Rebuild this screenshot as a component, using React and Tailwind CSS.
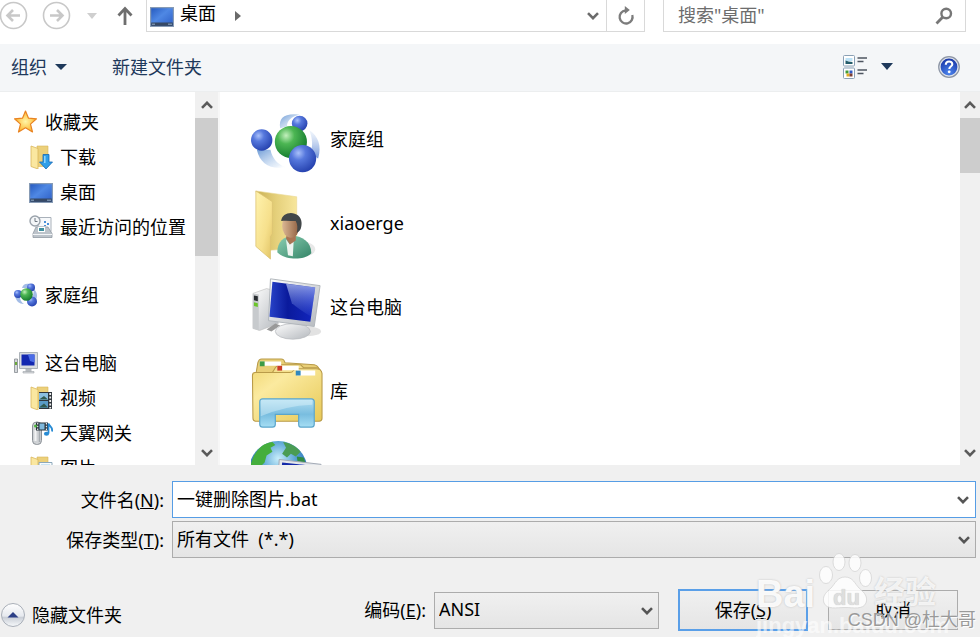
import React, { useState } from "react";

const FAVORITES = [
  { name: "下载", icon: DownloadIcon },
  { name: "桌面", icon: DesktopIcon },
  { name: "最近访问的位置", icon: RecentIcon },
];

const COMPUTER = [
  { name: "视频", icon: VideoIcon },
  { name: "天翼网关", icon: GatewayIcon },
  { name: "图片", icon: PicturesIcon },
];

const FILES = [
  { name: "家庭组", icon: HomegroupIcon },
  { name: "xiaoerge", icon: UserFolderIcon },
  { name: "这台电脑", icon: ComputerIcon },
  { name: "库", icon: LibraryIcon },
  { name: "", icon: NetworkIcon },
];

export default function App() {
  const [fileName, setFileName] = useState("一键删除图片.bat");
  const [query, setQuery] = useState("");

  return (
    <div className="relative flex h-screen flex-col overflow-hidden bg-[#f0f0f0] font-['Noto_Sans','Noto_Sans_CJK_SC',sans-serif] text-[18px] leading-6 text-black">
      {/* Address bar */}
      <header className="flex h-11 shrink-0 items-start bg-white pr-[14px]">
        <nav className="flex h-[31px] w-[146px] shrink-0 items-center">
          <button aria-label="后退" className="-ml-px">
            <ArrowCircle />
          </button>
          <button aria-label="前进" className="ml-[14px] rotate-180">
            <ArrowCircle />
          </button>
          <button aria-label="最近" className="ml-4">
            <Triangle className="h-[6px] w-[10px] text-[#cfcfcf]" />
          </button>
          <button aria-label="上移" className="ml-5">
            <svg viewBox="0 0 16 20" className="h-5 w-4" fill="none" stroke="#6e6e6e" strokeWidth="2.8">
              <path d="M8 19V3M1.5 9.5 8 2.500l6.500 7" />
            </svg>
          </button>
        </nav>

        <div className="flex h-8 flex-1 border-x border-b border-[#d9d9d9]">
          <button className="flex items-center pl-[3px]">
            <DesktopIcon className="h-6 w-6" />
            <span className="-mt-[6px] ml-[6px]">桌面</span>
            <svg viewBox="0 0 6 10" className="ml-[19px] h-[10px] w-[6px]">
              <path d="M0 0l6 5-6 5z" fill="#6a6a6a" />
            </svg>
          </button>
          <button aria-label="展开" className="ml-auto flex w-[26px] items-center justify-center">
            <Chevron className="h-2 w-3 text-[#6b6b6b]" />
          </button>
          <button aria-label="刷新" className="flex w-[38px] items-center justify-center border-l border-[#d9d9d9]">
            <svg viewBox="0 0 18 20" className="h-5 w-[18px]" fill="none" stroke="#7c7c7c" strokeWidth="2.300">
              <path d="M8.500 4.500A6.500 6.500 0 1 0 15.300 9" />
              <path d="M7.800 0v8l5-4z" fill="#7c7c7c" stroke="none" />
            </svg>
          </button>
        </div>

        <div className="ml-[18px] flex h-8 w-[303px] items-center border-x border-b border-[#d9d9d9] pr-3 pl-[14px]">
          <input
            aria-label="搜索"
            value={query}
            onChange={(e) => setQuery(e.target.value)}
            placeholder={'搜索"桌面"'}
            className="h-7 min-w-0 flex-1 bg-transparent pb-[2px] outline-none placeholder:text-[#6d6d6d]"
          />
          <svg viewBox="0 0 18 18" className="h-[18px] w-[18px]" fill="none" stroke="#777" strokeWidth="2.400">
            <circle cx="11.200" cy="6.500" r="4.800" />
            <path d="M7.600 10.200 1.500 16.500" strokeWidth="2.800" />
          </svg>
        </div>
      </header>

      {/* Toolbar */}
      <div className="flex h-12 shrink-0 items-center border-b border-[#eceeef] bg-[#f4f6f8] pr-5 pb-[2px] pl-[11px] text-[#1e395b]">
        <button className="flex items-center gap-2">
          组织
          <Triangle className="h-[6px] w-3 text-[#1e395b]" />
        </button>
        <button className="ml-[45px]">新建文件夹</button>
        <button aria-label="更改视图" className="ml-auto flex items-center gap-[14px]">
          <ViewIcon />
          <Triangle className="h-[7px] w-3 text-[#1e395b]" />
        </button>
        <button aria-label="帮助" className="ml-[45px]">
          <HelpIcon />
        </button>
      </div>

      {/* Folder tree and file list */}
      <main className="flex min-h-0 flex-1 bg-white">
        <aside className="w-[195px] shrink-0 overflow-hidden pt-3">
          <TreeGroup name="收藏夹" icon={StarIcon} items={FAVORITES} />
          <TreeGroup name="家庭组" icon={HomegroupSmallIcon} items={[]} />
          <TreeGroup name="这台电脑" icon={ComputerSmallIcon} items={COMPUTER} />
        </aside>
        <ScrollBar className="w-[25px] border-r-2 border-[#f7f7f7]" thumb="h-[138px]" />
        <ul className="flex-1 overflow-hidden pt-[5px] pl-[31px]">
          {FILES.map(({ name, icon: Icon }, i) => (
            <li key={i} className="flex h-[84px] items-center gap-[7px]">
              <Icon className="mt-1 h-[72px] w-[72px] shrink-0" />
              <span>{name}</span>
            </li>
          ))}
        </ul>
        <ScrollBar className="w-5" thumb="h-[55px]" />
      </main>

      {/* File name, type and encoding */}
      <form className="shrink-0 pt-4 pb-[6px]" onSubmit={(e) => e.preventDefault()}>
        <div className="flex items-center gap-2 pr-1">
          <label htmlFor="filename" className="w-[164px] text-right">
            文件名(<u>N</u>):
          </label>
          <div className="flex h-[37px] flex-1 items-center border border-[#569de5] bg-white pr-[6px]">
            <input
              id="filename"
              value={fileName}
              onChange={(e) => setFileName(e.target.value)}
              className="h-full min-w-0 flex-1 bg-transparent pb-[3px] pl-1 outline-none"
            />
            <Chevron className="h-2 w-3 text-[#555]" />
          </div>
        </div>

        <div className="mt-[3px] flex items-center gap-2 pr-1">
          <label htmlFor="filetype" className="w-[164px] text-right">
            保存类型(<u>T</u>):
          </label>
          <Select id="filetype" className="flex-1" option={"所有文件\u00a0\u00a0(*.*)"} />
        </div>

        <div className="mt-[31px] flex items-center pr-[22px]">
          <button type="button" className="flex items-center gap-[6px] pt-[10px]">
            <svg viewBox="0 0 26 26" className="h-[26px] w-[26px]">
              <defs>
                <linearGradient id="orb" x1="0" y1="0" x2="0" y2="1">
                  <stop offset="0" stopColor="#fff" />
                  <stop offset="0.55" stopColor="#e6e9ee" />
                  <stop offset="0.600" stopColor="#c9ced6" />
                  <stop offset="1" stopColor="#f8fafc" />
                </linearGradient>
              </defs>
              <circle cx="13" cy="13" r="11.500" fill="url(#orb)" stroke="#a9afb8" />
              <path d="M7.500 15.500 13 10l5.500 5.500z" fill="#2c3f86" />
            </svg>
            隐藏文件夹
          </button>
          <label htmlFor="encoding" className="ml-auto">
            编码(<u>E</u>):
          </label>
          <Select id="encoding" className="ml-2 w-[225px]" option="ANSI" />
          <button type="submit" className="ml-[19px] h-[42px] w-[130px] border-2 border-[#5a9fe8] bg-gradient-to-b from-[#f0f0f0] to-[#e5e5e5]">
            保存(<u>S</u>)
          </button>
          <button type="button" className="ml-5 h-10 w-[130px] border border-[#acacac] bg-gradient-to-b from-[#f0f0f0] to-[#e5e5e5]">
            取消
          </button>
        </div>
      </form>

      <Watermark />
    </div>
  );
}

function TreeGroup({ name, icon: Icon, items }) {
  return (
    <section className="mb-[33px]">
      <div className="flex h-[35px] items-center gap-[7px] pl-[14px]">
        <Icon className="h-6 w-6 shrink-0" />
        {name}
      </div>
      {items.map(({ name: label, icon: ItemIcon }) => (
        <div key={label} className="flex h-[35px] items-center gap-[7px] pl-[29px] whitespace-nowrap">
          <ItemIcon className="h-6 w-6 shrink-0" />
          {label}
        </div>
      ))}
    </section>
  );
}

function ScrollBar({ className, thumb }) {
  return (
    <div className={`flex shrink-0 flex-col items-center bg-[#f0f0f0] ${className}`}>
      <div className="flex h-[26px] items-center">
        <Chevron className="h-2 w-3 rotate-180 text-[#5a5a5a]" />
      </div>
      <div className={`w-full bg-[#cdcdcd] ${thumb}`} />
      <div className="mt-auto flex h-[25px] items-center">
        <Chevron className="h-2 w-3 text-[#5a5a5a]" />
      </div>
    </div>
  );
}

function Select({ id, option, className }) {
  return (
    <div className={`relative ${className}`}>
      <select
        id={id}
        className="block h-[37px] w-full appearance-none border border-[#acacac] bg-gradient-to-b from-[#f0f0f0] to-[#e5e5e5] pb-[2px] pl-1 outline-none"
      >
        <option>{option}</option>
      </select>
      <Chevron className="pointer-events-none absolute top-[15px] right-[6px] h-2 w-3 text-[#555]" />
    </div>
  );
}

function Watermark() {
  return (
    <div
      className="pointer-events-none absolute right-0 bottom-0 h-[88px] w-[224px] overflow-hidden font-['Liberation_Sans','Noto_Sans_CJK_SC',sans-serif]"
      aria-hidden="true"
    >
      <div className="absolute top-[23px] left-0 text-[38px] leading-[44px] font-bold text-white/90 [text-shadow:0_0_2px_#bbb]">Bai</div>
      <svg viewBox="0 0 54 62" className="absolute top-[2px] left-[62px] h-[62px] w-[54px] opacity-85" fill="#fff" stroke="#cfcfcf" strokeWidth="0.800">
        <ellipse cx="21" cy="11" rx="6" ry="8.500" />
        <ellipse cx="37" cy="12" rx="6" ry="8.500" />
        <ellipse cx="8" cy="24" rx="6.500" ry="8.500" />
        <ellipse cx="47.500" cy="27" rx="6" ry="8.500" />
        <path d="M27 26c-8 0-10 7-14 11C7 42 4 46 6 52c3 7 13 4.500 21 4.500s18 2.500 21-4.500c2-6-1-10-7-15-4-4-6-11-14-11z" />
      </svg>
      <div className="absolute top-[35px] left-[77px] text-[22px] leading-7 font-bold text-[#dedede] [text-shadow:0_0_1px_#bbb]">du</div>
      <div className="absolute top-[24px] left-[118px] text-[31px] leading-10 font-bold text-white/80 [text-shadow:0_0_2px_#bbb]">经验</div>
      <div className="absolute top-[65px] left-0 text-[22px] leading-6 font-bold text-white/60">jingyan.baidu.com</div>
      <div className="absolute right-1 bottom-[5px] text-[18px] leading-6 whitespace-nowrap text-[#9a9a9a] [text-shadow:1px_1px_1px_#fff]">
        CSDN @杜大哥
      </div>
    </div>
  );
}

function Chevron({ className }) {
  return (
    <svg viewBox="0 0 12 8" className={className} fill="none" stroke="currentColor" strokeWidth="2.600">
      <path d="M1 1.200 6 6.200l5-5" />
    </svg>
  );
}

function Triangle({ className }) {
  return (
    <svg viewBox="0 0 12 6" preserveAspectRatio="none" className={className}>
      <path d="M0 0h12L6 6z" fill="currentColor" />
    </svg>
  );
}

function ArrowCircle() {
  return (
    <svg viewBox="0 0 29 29" className="h-[29px] w-[29px]" fill="none" stroke="#c8c8c8">
      <circle cx="14.500" cy="14.500" r="13" strokeWidth="1.600" />
      <path d="M21 14.500H9M14 9l-5.500 5.500L14 20" strokeWidth="2.600" />
    </svg>
  );
}

function ViewIcon() {
  return (
    <svg viewBox="0 0 24 24" className="h-6 w-6">
      <g fill="#fff" stroke="#8aa0b5">
        <rect x="0.500" y="0.500" width="11" height="10.500" rx="1" />
        <rect x="0.500" y="13" width="11" height="10.500" rx="1" />
      </g>
      <path d="M2.500 3h7v3h-7z" fill="#bfe3f7" />
      <path d="M2.500 5.500l3 1 4 .5v2h-7z" fill="#245c6a" />
      <path d="M2.500 15.500h3v3h-3z" fill="#3f9b3a" />
      <path d="M6.500 15.500h3v3h-3z" fill="#2f58c4" />
      <path d="M3.500 18.500h3v3h-3z" fill="#e0ad22" />
      <path d="M6.500 18.500h3v3h-3z" fill="#7c3f35" />
      <path d="M14.500 3H24M14.500 6.500h6M14.500 15H24M14.500 18.500h6" stroke="#4d5560" strokeWidth="1.500" />
    </svg>
  );
}

function HelpIcon() {
  return (
    <svg viewBox="0 0 22 22" className="h-[22px] w-[22px]">
      <defs>
        <radialGradient id="help" cx="0.500" cy="0.850" r="0.800">
          <stop offset="0" stopColor="#4d86ee" />
          <stop offset="1" stopColor="#1c3bab" />
        </radialGradient>
      </defs>
      <circle cx="11" cy="11" r="10.300" fill="#dfe3ea" stroke="#8c95a5" strokeWidth="1.200" />
      <circle cx="11" cy="11" r="8.400" fill="url(#help)" />
      <path d="M7.800 8.700c0-4.200 6.500-4.200 6.500-.4 0 2.300-3 2.200-3 4.700" fill="none" stroke="#fff" strokeWidth="2.100" />
      <circle cx="11.200" cy="15.800" r="1.400" fill="#fff" />
    </svg>
  );
}

function StarIcon({ className }) {
  return (
    <svg viewBox="0 0 24 24" className={className}>
      <defs>
        <radialGradient id="star">
          <stop offset="0" stopColor="#fff6a8" />
          <stop offset="1" stopColor="#fdb52c" />
        </radialGradient>
      </defs>
      <path d="M11.500 1l3 7.200 8 .6-6 5.300 2 7.900-7-4.200-7 4.200 2-7.900-6-5.300 8-.6z" fill="url(#star)" stroke="#e98322" strokeWidth="1.200" strokeLinejoin="round" />
    </svg>
  );
}

function SmallFolder() {
  return (
    <>
      <path d="M8 1h11v20.500H8z" fill="#ecd07a" stroke="#d8b65a" strokeWidth="0.600" />
      <path d="M2 1l7 2.500V24l-7-2.500z" fill="#fae7a0" stroke="#d9b65c" strokeWidth="0.800" />
    </>
  );
}

function DownloadIcon({ className }) {
  return (
    <svg viewBox="0 0 24 24" className={className}>
      <SmallFolder />
      <path d="M14 9.500h6V17h3.500L17 24l-6.500-7H14z" fill="#2f9ee8" stroke="#1668b4" strokeWidth="0.800" />
      <path d="M15.800 11v7" fill="none" stroke="#8fd6ff" strokeWidth="1.500" />
    </svg>
  );
}

function DesktopIcon({ className }) {
  return (
    <svg viewBox="0 0 24 24" className={className}>
      <defs>
        <linearGradient id="desk" x1="0" y1="0" x2="1" y2="1">
          <stop offset="0" stopColor="#2458bd" />
          <stop offset="0.450" stopColor="#4f88e4" />
          <stop offset="1" stopColor="#2b5cc4" />
        </linearGradient>
      </defs>
      <rect x="0.600" y="3.600" width="22.800" height="18.800" fill="url(#desk)" stroke="#879bb5" strokeWidth="1.200" />
      <path d="M1.200 18.500h21.600v3.400H1.200z" fill="#364965" />
      <path d="M2 20.200h3M18 20.200h4" stroke="#91acc9" />
    </svg>
  );
}

function RecentIcon({ className }) {
  return (
    <svg viewBox="0 0 24 24" className={className}>
      <path d="M9 2.500h13v14H9z" fill="#f7f9fb" stroke="#a9b1ba" />
      <path d="M15 6h2v2h-2zM18 8h2v2h-2zM15 10h2v1h-2z" fill="#4a90d9" />
      <path d="M4 18.500L7 12h12l4 6.500v4H4z" fill="#bcc3ca" stroke="#929aa3" strokeWidth="0.800" />
      <path d="M8.500 11.500h8v6h-8z" fill="#fff" stroke="#a8b0b8" strokeWidth="0.600" />
      <path d="M10 13h5v3h-5z" fill="#3f8f9f" />
      <path d="M4 19.500h19" stroke="#f2f4f6" />
      <circle cx="6" cy="6" r="5" fill="#f4f6f8" stroke="#9aa2ab" strokeWidth="1.400" />
      <path d="M6 3v3.500h2.500" fill="none" stroke="#6f7882" />
    </svg>
  );
}

function VideoIcon({ className }) {
  return (
    <svg viewBox="0 0 24 24" className={className}>
      <SmallFolder />
      <path d="M10 6h13v17H10z" fill="#30363c" />
      <path d="M10 7h9v7h-9z" fill="#8bbfe0" />
      <path d="M10 15h9v7h-9z" fill="#5a9bc6" />
      <path d="M10 13.500l5-3.500 4 3.500zM10 21.500l5-4 4 4z" fill="#315b50" />
      <path d="M21.200 7v15.500" stroke="#f0f0f0" strokeWidth="1.800" strokeDasharray="2 1.500" />
    </svg>
  );
}

function GatewayIcon({ className }) {
  return (
    <svg viewBox="0 0 24 24" className={className}>
      <rect x="3.500" y="1" width="9" height="22.500" rx="4" fill="#cfd2d5" stroke="#8a9096" />
      <path d="M6.500 9v11" stroke="#f3f4f5" strokeWidth="2" />
      <path d="M10.500 9v12" stroke="#a5abb0" strokeWidth="1.500" />
      <path d="M7 1.500h12v8H7z" fill="#27323b" />
      <path d="M10.500 2.500h5v6h-5z" fill="#7fb8dc" />
      <path d="M8.700 2v7.500M17.400 2v7.500" stroke="#e8edf0" strokeWidth="1.200" strokeDasharray="1.500 1.200" />
      <circle cx="6.500" cy="5" r="1.500" fill="#4cb53c" />
      <path d="M19.500 12.500V2.500c1 3 4.500 3.500 3.500 8" fill="none" stroke="#278bd4" strokeWidth="1.800" />
      <ellipse cx="17.500" cy="12.700" rx="2.600" ry="2" fill="#278bd4" />
    </svg>
  );
}

function PicturesIcon({ className }) {
  return (
    <svg viewBox="0 0 24 24" className={className}>
      <SmallFolder />
      <path d="M10 6.500h13v12H10z" fill="#f8fbfd" stroke="#8ca8bb" />
      <path d="M12 8.500h9v8h-9z" fill="#9bcdea" />
      <path d="M12 16.500l4-5 2 3 3-2v4z" fill="#4e9ac6" />
    </svg>
  );
}

function BallGradients() {
  return (
    <>
      <radialGradient id="ballBlue" cx="0.350" cy="0.300" r="0.750">
        <stop offset="0" stopColor="#a9c0fa" />
        <stop offset="0.350" stopColor="#5678dd" />
        <stop offset="1" stopColor="#2440ad" />
      </radialGradient>
      <radialGradient id="ballGreen" cx="0.350" cy="0.300" r="0.750">
        <stop offset="0" stopColor="#c3f0bd" />
        <stop offset="0.350" stopColor="#4cb653" />
        <stop offset="1" stopColor="#12772c" />
      </radialGradient>
    </>
  );
}

function HomegroupSmallIcon({ className }) {
  return (
    <svg viewBox="0 0 24 24" className={className}>
      <defs>
        <BallGradients />
      </defs>
      <path d="M1 13c1 5 4 8 9 8-3-2-4-4-4-8zM8 5c1-4 4-5 8-4l-3 4zM20 6c3 3 4 7 2 11l-3-4z" fill="#a3bce6" />
      <circle cx="17" cy="4.500" r="4" fill="url(#ballBlue)" />
      <circle cx="4" cy="11" r="4" fill="url(#ballBlue)" />
      <circle cx="18" cy="18.500" r="5" fill="url(#ballBlue)" />
      <circle cx="12.500" cy="11.500" r="6.300" fill="url(#ballGreen)" />
    </svg>
  );
}

function HomegroupIcon({ className }) {
  return (
    <svg viewBox="0 -2 74 74" className={className}>
      <defs>
        <BallGradients />
        <linearGradient id="trail" x1="0" y1="0" x2="1" y2="1">
          <stop offset="0" stopColor="#6f9cd6" />
          <stop offset="0.800" stopColor="#dbe8f7" stopOpacity="0.600" />
          <stop offset="1" stopColor="#fff" stopOpacity="0" />
        </linearGradient>
        <linearGradient id="trailUp" x1="0" y1="0" x2="0" y2="1">
          <stop offset="0" stopColor="#e3edf9" stopOpacity="0.500" />
          <stop offset="1" stopColor="#6f92d8" />
        </linearGradient>
        <filter id="soft">
          <feGaussianBlur stdDeviation="0.800" />
        </filter>
      </defs>
      <g filter="url(#soft)">
        <path d="M6 44c3 14 14 21 30 18-9-3-14-9-16-18z" fill="url(#trail)" />
        <path d="M30 22c-2-11 5-16 20-14-9 2-13 6-13 12z" fill="url(#trail)" />
        <path d="M60 24c9 6 13 16 9 29l-8-5c3-8 2-16-1-24z" fill="url(#trailUp)" />
      </g>
      <circle cx="50" cy="17" r="8" fill="url(#ballBlue)" />
      <circle cx="11" cy="34" r="11" fill="url(#ballBlue)" />
      <circle cx="41" cy="36" r="16.500" fill="url(#ballGreen)" />
      <circle cx="53" cy="53" r="14" fill="url(#ballBlue)" />
    </svg>
  );
}

function UserFolderIcon({ className }) {
  return (
    <svg viewBox="0 0 74 74" className={className}>
      <defs>
        <linearGradient id="flap" x1="0" y1="0" x2="1" y2="1">
          <stop offset="0" stopColor="#fff3ae" />
          <stop offset="0.600" stopColor="#f6e08c" />
          <stop offset="1" stopColor="#e0c263" />
        </linearGradient>
        <linearGradient id="back" x1="0" y1="0" x2="1" y2="0">
          <stop offset="0" stopColor="#c9b052" />
          <stop offset="0.500" stopColor="#e5d07b" />
          <stop offset="1" stopColor="#f7e69c" />
        </linearGradient>
        <linearGradient id="skin" x1="0" y1="0" x2="1" y2="0">
          <stop offset="0" stopColor="#dcb894" />
          <stop offset="1" stopColor="#8d5d3f" />
        </linearGradient>
        <linearGradient id="coat" x1="0" y1="0" x2="1" y2="1">
          <stop offset="0" stopColor="#8dd0b4" />
          <stop offset="1" stopColor="#338467" />
        </linearGradient>
      </defs>
      <ellipse cx="52" cy="62" rx="14" ry="8" fill="#dedede" opacity="0.700" />
      <path d="M5 2l42 6v53l-28 2z" fill="url(#back)" stroke="#e8d792" strokeWidth="0.600" />
      <path d="M5 2l17 11v33l-2 3v23L5 59z" fill="url(#flap)" stroke="#dcc372" strokeWidth="0.800" />
      <path d="M27 65c0-11 7-16 15-17 10 0 20 6 20 18-7 8-28 7-35-1z" fill="url(#coat)" />
      <path d="M36 52l4 5 4-6-1 18-5-1z" fill="#eef4f0" />
      <path d="M37 45h9v8l-6 4-4-6z" fill="#a97454" />
      <ellipse cx="41" cy="38" rx="9" ry="12" fill="url(#skin)" />
      <path d="M31 33c1-12 21-11 21 2 0 6-2 9-5 10 1-5 1-8-1-12-5 0-10-1-15 0z" fill="#424749" />
    </svg>
  );
}

function ComputerSmallIcon({ className }) {
  return (
    <svg viewBox="0 0 24 24" className={className}>
      <path d="M0.500 8h3v13.500h-3z" fill="#d5d8db" stroke="#858b91" strokeWidth="0.800" />
      <path d="M1 11h2v3H1z" fill="#6ba83b" />
      <path d="M11.500 17h6v4h-6z" fill="#b5b9be" />
      <path d="M9 20.500h11v1.500H9z" fill="#d9dcdf" stroke="#9da2a8" strokeWidth="0.600" />
      <path d="M5.500 1.500h18v16h-18z" fill="#d9dce0" stroke="#9ca3ab" strokeWidth="0.800" />
      <path d="M7.500 3.500h13v11h-13z" fill="#1328b0" />
      <path d="M14 3.500h6.500v8L16 10z" fill="#4b6ce6" />
    </svg>
  );
}

function ComputerIcon({ className }) {
  return (
    <svg viewBox="0 -2 74 74" className={className}>
      <defs>
        <linearGradient id="screen" x1="0" y1="0" x2="1" y2="0">
          <stop offset="0" stopColor="#2843c8" />
          <stop offset="0.400" stopColor="#0a1a9c" />
          <stop offset="1" stopColor="#1226c0" />
        </linearGradient>
        <linearGradient id="glare" x1="0" y1="0" x2="0" y2="1">
          <stop offset="0" stopColor="#c5d3fb" stopOpacity="0.700" />
          <stop offset="1" stopColor="#5d79e6" stopOpacity="0.100" />
        </linearGradient>
        <linearGradient id="metal" x1="0" y1="0" x2="1" y2="1">
          <stop offset="0" stopColor="#fdfdfd" />
          <stop offset="1" stopColor="#b5b9be" />
        </linearGradient>
      </defs>
      <ellipse cx="58" cy="58" rx="14" ry="5" fill="#d6d6d6" opacity="0.700" />
      <path d="M2 19l14-5 12 3v33L9 57l-7-2z" fill="url(#metal)" stroke="#bbb" strokeWidth="0.600" />
      <path d="M2 19l6 1v37l-6-2z" fill="#c7cacd" />
      <path d="M3 21l4 1v5l-4-1z" fill="#292d31" />
      <path d="M3 28l4 1v4l-4-1z" fill="#6cc52b" />
      <path d="M16 56l9-6 5 2-9 6z" fill="#999" />
      <path d="M39 48h13l2 9H37z" fill="#a8acb1" />
      <ellipse cx="43" cy="58" rx="18" ry="8" fill="url(#metal)" stroke="#b9bcc0" strokeWidth="0.800" />
      <path d="M20 4l51 7-6 42-47-6z" fill="url(#metal)" stroke="#b1b6bb" />
      <path d="M22 7l44 6-5 35-42-5z" fill="url(#screen)" />
      <path d="M36 9l30 4-4 30q-13-8-20-14z" fill="url(#glare)" />
    </svg>
  );
}

function LibraryIcon({ className }) {
  return (
    <svg viewBox="0 0 74 74" className={className}>
      <defs>
        <linearGradient id="lib" x1="0" y1="0" x2="1" y2="1">
          <stop offset="0" stopColor="#f1d977" />
          <stop offset="0.300" stopColor="#fbea9f" />
          <stop offset="1" stopColor="#e7c957" />
        </linearGradient>
        <linearGradient id="stand" x1="0" y1="0" x2="0" y2="1">
          <stop offset="0" stopColor="#b3dff2" />
          <stop offset="0.550" stopColor="#79bddf" />
          <stop offset="1" stopColor="#a6def4" />
        </linearGradient>
      </defs>
      <g stroke="#b99b49" strokeWidth="1.100">
        <path d="M5 18l2-12q1-4 4-4h20q3 0 4 4l30 2q4 1 5 5v25H5z" fill="#e9cf77" />
        <path d="M4 16h18l3-5q2-3 4-3h22l3 3h13q4 0 5 5v48H4z" fill="#f4df8c" />
        <path d="M1.500 19q0-3 3-3h35q3 0 4-2 1-2 5-2h18q6 0 6.500 5v46q0 3-3 3h-65q-3 0-3-3z" fill="url(#lib)" />
      </g>
      <path d="M9 4.500h22v4.500H9zM27 9h22v4.500H27zM47 14h19v5H47z" fill="#fff" />
      <path d="M9 4.500h5v5H9z" fill="#3d9b45" />
      <path d="M27 9h5v5h-5z" fill="#cc3d25" />
      <path d="M46 14h5v5h-5z" fill="#3188bd" />
      <path d="M12 43h50q3 0 3 3v23q0 3-3 3H51q-2 0-2-3V59H25v10q0 3-3 3H12q-3 0-3-3V46q0-3 3-3z" fill="url(#stand)" stroke="#5aa5cb" strokeWidth="1.200" />
      <path d="M10 44h53v5q-28 1-53 12z" fill="#e5f7fc" opacity="0.400" />
    </svg>
  );
}

function NetworkIcon({ className }) {
  return (
    <svg viewBox="0 1 74 74" className={className}>
      <defs>
        <radialGradient id="globe" cx="0.500" cy="0.300" r="0.600">
          <stop offset="0" stopColor="#c8eefb" />
          <stop offset="0.500" stopColor="#57a3d4" />
          <stop offset="1" stopColor="#1f5fae" />
        </radialGradient>
      </defs>
      <circle cx="28" cy="31" r="30" fill="url(#globe)" />
      <path d="M1 21C5 10 12 3 22 2l3 3-5 3 2 4-6 4-2 7-8 8-8-1z" fill="#45ae3c" />
      <path d="M33 2c8 1 14 5 18 10l-5 5-5-3-4 4-5-4 4-6z" fill="#4a9c54" />
      <path d="M47 17l7 1 3 8-8 3z" fill="#318c43" />
      <path d="M29 20l43 5-4 37-41-5z" fill="#e4e7eb" stroke="#a1a9b4" />
      <path d="M32 23l36 4-4 29-34-4z" fill="#1429a8" />
      <path d="M49 25l19 2-2 14-14-3z" fill="#6a82df" />
    </svg>
  );
}
